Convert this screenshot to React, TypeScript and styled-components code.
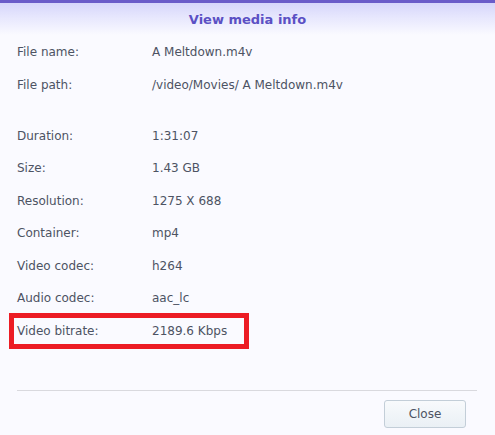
import styled, { createGlobalStyle } from 'styled-components';
import { Fragment } from 'react';

const GlobalStyle = createGlobalStyle`
  html, body {
    margin: 0;
    padding: 0;
    background: #fafaff;
  }
  body {
    font-family: "DejaVu Sans", Verdana, sans-serif;
  }
`;

interface Info {
  label: string;
  value: string;
  gapBefore?: boolean;
  marked?: boolean;
}

const rows: Info[] = [
  { label: 'File name:', value: 'A Meltdown.m4v' },
  { label: 'File path:', value: '/video/Movies/ A Meltdown.m4v' },
  { label: 'Duration:', value: '1:31:07', gapBefore: true },
  { label: 'Size:', value: '1.43 GB' },
  { label: 'Resolution:', value: '1275 X 688' },
  { label: 'Container:', value: 'mp4' },
  { label: 'Video codec:', value: 'h264' },
  { label: 'Audio codec:', value: 'aac_lc' },
  { label: 'Video bitrate:', value: '2189.6 Kbps', marked: true },
];

const Dialog = styled.div`
  width: 495px;
  height: 435px;
  display: flex;
  flex-direction: column;
  background: #fafaff;
  border-top: 3px solid #6a5cc9;
  box-sizing: border-box;
  overflow: hidden;
`;

const Header = styled.div`
  height: 32px;
  flex-shrink: 0;
  display: flex;
  align-items: center;
  justify-content: center;
  background: linear-gradient(to bottom, #d6d6fb 0%, #e7e7fd 45%, #fafaff 100%);
  color: #5b50c4;
  font-size: 13px;
  font-weight: bold;
`;

const Body = styled.div`
  flex: 1;
  margin-top: -1px;
  padding-left: 9px;
  display: flex;
  flex-direction: column;
`;

const Row = styled.div<{ $gap?: boolean; $marked?: boolean }>`
  display: flex;
  align-items: center;
  width: 240px;
  height: 36px;
  flex-shrink: 0;
  box-sizing: border-box;
  margin-top: ${(p) => (p.$gap ? '15px' : '-3.5px')};
  border: 5px solid ${(p) => (p.$marked ? '#ec1c24' : 'transparent')};
  padding-left: 3px;
  font-size: 12px;
  color: #4d5363;
  white-space: nowrap;

  &:first-child {
    margin-top: 0;
  }
`;

const Label = styled.span`
  width: 135px;
  flex-shrink: 0;
`;

const Value = styled.span``;

const Footer = styled.div`
  margin: 0 18px 0 17px;
  border-top: 1px solid #d9d9de;
  box-shadow: 0 1px 0 #ededf1;
  height: 45px;
  box-sizing: border-box;
  padding: 9px 11px 0 0;
  display: flex;
  align-items: flex-start;
  justify-content: flex-end;
  flex-shrink: 0;
`;

const Button = styled.button`
  width: 82px;
  height: 28px;
  border: 1px solid #c3ced8;
  border-radius: 3px;
  background: linear-gradient(to bottom, #f8fafc, #eaf0f5);
  color: #4d5363;
  font-family: "DejaVu Sans", Verdana, sans-serif;
  font-size: 12px;
`;

export default function App(): JSX.Element {
  return (
    <Fragment>
      <GlobalStyle />
      <Dialog>
        <Header>View media info</Header>
        <Body>
          {rows.map((r) => (
            <Row key={r.label} $gap={r.gapBefore} $marked={r.marked}>
              <Label>{r.label}</Label>
              <Value>{r.value}</Value>
            </Row>
          ))}
        </Body>
        <Footer>
          <Button>Close</Button>
        </Footer>
      </Dialog>
    </Fragment>
  );
}
